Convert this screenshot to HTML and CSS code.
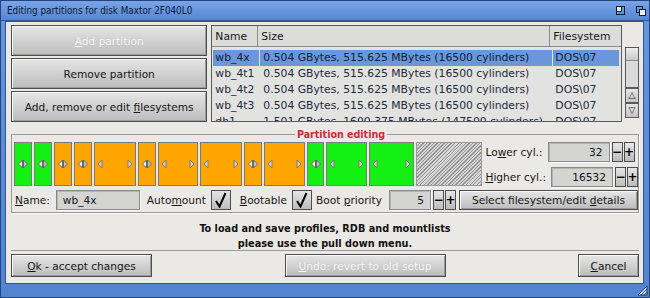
FILE: index.html
```html
<!DOCTYPE html>
<html lang="en">
<head>
    <meta charset="UTF-8">
    <title>Editing partitions</title>
    <link rel="stylesheet" href="styles.css">
</head>
<body>
<div class="window">
    <div class="titlebar">
        <span class="title">Editing partitions for disk Maxtor 2F040L0</span>
        <span class="gadgets">
            <svg width="10" height="10" viewBox="0 0 10 10"><rect x="0.5" y="0.5" width="8" height="8" fill="none" stroke="#0d1a33"/><path d="M0.5 5.5H5.5V0.5" fill="none" stroke="#0d1a33"/><rect x="1" y="1" width="4" height="4" fill="#eef3fb"/></svg>
            <svg width="10" height="10" viewBox="0 0 10 10"><rect x="0.5" y="0.5" width="6" height="6" fill="none" stroke="#0d1a33"/><rect x="3.5" y="3.5" width="6" height="6" fill="#eef3fb" stroke="#0d1a33"/></svg>
        </span>
    </div>

    <div class="body">
        <div class="top">
            <div class="actions">
                <button class="btn disabled"><u>A</u>dd partition</button>
                <button class="btn">Remove partition</button>
                <button class="btn">Add, remove or edit <u>f</u>ilesystems</button>
            </div>

            <div class="list">
                <div class="list-head">
                    <div class="cell">Name</div>
                    <div class="cell">Size</div>
                    <div class="cell">Filesystem</div>
                </div>
                <div class="row selected">
                    <div class="cell">wb_4x</div>
                    <div class="cell">0.504 GBytes, 515.625 MBytes (16500 cylinders)</div>
                    <div class="cell">DOS\07</div>
                </div>
                <div class="row">
                    <div class="cell">wb_4t1</div>
                    <div class="cell">0.504 GBytes, 515.625 MBytes (16500 cylinders)</div>
                    <div class="cell">DOS\07</div>
                </div>
                <div class="row">
                    <div class="cell">wb_4t2</div>
                    <div class="cell">0.504 GBytes, 515.625 MBytes (16500 cylinders)</div>
                    <div class="cell">DOS\07</div>
                </div>
                <div class="row">
                    <div class="cell">wb_4t3</div>
                    <div class="cell">0.504 GBytes, 515.625 MBytes (16500 cylinders)</div>
                    <div class="cell">DOS\07</div>
                </div>
                <div class="row">
                    <div class="cell">dh1</div>
                    <div class="cell">1.501 GBytes, 1600.375 MBytes (147500 cylinders)</div>
                    <div class="cell">DOS\07</div>
                </div>
            </div>

            <div class="scroller">
                <div class="track"><div class="knob"></div></div>
                <div class="arrow">&#9651;</div>
                <div class="arrow">&#9661;</div>
            </div>
        </div>

        <div class="group">
            <div class="legend">Partition editing</div>

            <div class="group-top">
                <div class="bar">
                    <div class="seg green narrow" style="width:18px"><svg class="dia" width="10" height="10" viewBox="0 0 10 10"><polygon points="4.5,1 0.5,5 4.5,9" fill="#f6f6f6" stroke="#6a6a6a"/><polygon points="5.5,1 9.5,5 5.5,9" fill="#c2c2c2" stroke="#6a6a6a"/></svg></div>
                    <div class="seg green narrow" style="width:18px"><svg class="dia" width="10" height="10" viewBox="0 0 10 10"><polygon points="4.5,1 0.5,5 4.5,9" fill="#f6f6f6" stroke="#6a6a6a"/><polygon points="5.5,1 9.5,5 5.5,9" fill="#c2c2c2" stroke="#6a6a6a"/></svg></div>
                    <div class="seg orange narrow" style="width:18px"><svg class="dia" width="10" height="10" viewBox="0 0 10 10"><polygon points="4.5,1 0.5,5 4.5,9" fill="#f6f6f6" stroke="#6a6a6a"/><polygon points="5.5,1 9.5,5 5.5,9" fill="#c2c2c2" stroke="#6a6a6a"/></svg></div>
                    <div class="seg orange narrow" style="width:18px"><svg class="dia" width="10" height="10" viewBox="0 0 10 10"><polygon points="4.5,1 0.5,5 4.5,9" fill="#f6f6f6" stroke="#6a6a6a"/><polygon points="5.5,1 9.5,5 5.5,9" fill="#c2c2c2" stroke="#6a6a6a"/></svg></div>
                    <div class="seg orange wide" style="width:42px"><svg width="6" height="10" viewBox="0 0 6 10"><polygon points="5,1 1,5 5,9" fill="#d2d2d2" stroke="#7a7a7a"/></svg><svg width="6" height="10" viewBox="0 0 6 10"><polygon points="1,1 5,5 1,9" fill="#d2d2d2" stroke="#7a7a7a"/></svg></div>
                    <div class="seg orange narrow" style="width:18px"><svg class="dia" width="10" height="10" viewBox="0 0 10 10"><polygon points="4.5,1 0.5,5 4.5,9" fill="#f6f6f6" stroke="#6a6a6a"/><polygon points="5.5,1 9.5,5 5.5,9" fill="#c2c2c2" stroke="#6a6a6a"/></svg></div>
                    <div class="seg orange wide" style="width:40px"><svg width="6" height="10" viewBox="0 0 6 10"><polygon points="5,1 1,5 5,9" fill="#d2d2d2" stroke="#7a7a7a"/></svg><svg width="6" height="10" viewBox="0 0 6 10"><polygon points="1,1 5,5 1,9" fill="#d2d2d2" stroke="#7a7a7a"/></svg></div>
                    <div class="seg orange wide" style="width:42px"><svg width="6" height="10" viewBox="0 0 6 10"><polygon points="5,1 1,5 5,9" fill="#d2d2d2" stroke="#7a7a7a"/></svg><svg width="6" height="10" viewBox="0 0 6 10"><polygon points="1,1 5,5 1,9" fill="#d2d2d2" stroke="#7a7a7a"/></svg></div>
                    <div class="seg orange narrow" style="width:18px"><svg class="dia" width="10" height="10" viewBox="0 0 10 10"><polygon points="4.5,1 0.5,5 4.5,9" fill="#f6f6f6" stroke="#6a6a6a"/><polygon points="5.5,1 9.5,5 5.5,9" fill="#c2c2c2" stroke="#6a6a6a"/></svg></div>
                    <div class="seg orange wide" style="width:41px"><svg width="6" height="10" viewBox="0 0 6 10"><polygon points="5,1 1,5 5,9" fill="#d2d2d2" stroke="#7a7a7a"/></svg><svg width="6" height="10" viewBox="0 0 6 10"><polygon points="1,1 5,5 1,9" fill="#d2d2d2" stroke="#7a7a7a"/></svg></div>
                    <div class="seg green narrow" style="width:17px"><svg class="dia" width="10" height="10" viewBox="0 0 10 10"><polygon points="4.5,1 0.5,5 4.5,9" fill="#f6f6f6" stroke="#6a6a6a"/><polygon points="5.5,1 9.5,5 5.5,9" fill="#c2c2c2" stroke="#6a6a6a"/></svg></div>
                    <div class="seg green wide" style="width:41px"><svg width="6" height="10" viewBox="0 0 6 10"><polygon points="5,1 1,5 5,9" fill="#d2d2d2" stroke="#7a7a7a"/></svg><svg width="6" height="10" viewBox="0 0 6 10"><polygon points="1,1 5,5 1,9" fill="#d2d2d2" stroke="#7a7a7a"/></svg></div>
                    <div class="seg green wide" style="width:45px"><svg width="6" height="10" viewBox="0 0 6 10"><polygon points="5,1 1,5 5,9" fill="#d2d2d2" stroke="#7a7a7a"/></svg><svg width="6" height="10" viewBox="0 0 6 10"><polygon points="1,1 5,5 1,9" fill="#d2d2d2" stroke="#7a7a7a"/></svg></div>
                    <div class="seg free" style="width:66px"></div>
                </div>

                <div class="cyl">
                    <div class="cyl-row">
                        <span class="label">Lo<u>w</u>er cyl.:</span>
                        <div class="field num">32</div>
                        <div class="step">&minus;</div>
                        <div class="step">+</div>
                    </div>
                    <div class="cyl-row">
                        <span class="label"><u>H</u>igher cyl.:</span>
                        <div class="field num">16532</div>
                        <div class="step">&minus;</div>
                        <div class="step">+</div>
                    </div>
                </div>
            </div>

            <div class="group-bottom">
                <span class="label"><u>N</u>ame:</span>
                <div class="field name">wb_4x</div>
                <span class="label automount">Auto<u>m</u>ount</span>
                <div class="check"><svg width="14" height="16" viewBox="0 0 14 16"><path d="M2 9 L5.5 14.5 L11.5 1" fill="none" stroke="#000" stroke-width="2"/></svg></div>
                <span class="label bootable"><u>B</u>ootable</span>
                <div class="check"><svg width="14" height="16" viewBox="0 0 14 16"><path d="M2 9 L5.5 14.5 L11.5 1" fill="none" stroke="#000" stroke-width="2"/></svg></div>
                <span class="label priority">Boot <u>p</u>riority</span>
                <div class="field num prio">5</div>
                <div class="step">&minus;</div>
                <div class="step">+</div>
                <button class="btn select">Select filesystem/edit <u>d</u>etails</button>
            </div>
        </div>

        <div class="info">
            To load and save profiles, RDB and mountlists<br>
            please use the pull down menu.
        </div>

        <div class="footer">
            <button class="btn ok"><u>O</u>k - accept changes</button>
            <button class="btn disabled undo"><u>U</u>ndo: revert to old setup</button>
            <button class="btn cancel"><u>C</u>ancel</button>
        </div>
    </div>

    <div class="bottom-border">
        <svg width="11" height="11" viewBox="0 0 11 11"><path d="M10 1L1 10H10Z" fill="#dfe8f6" stroke="#1c3566"/><path d="M10 4L4 10M10 7L7 10" stroke="#1c3566"/></svg>
    </div>
</div>
</body>
</html>
```

FILE: styles.css
```css
html, body {
    margin: 0;
    padding: 0;
}
body {
    width: 650px;
    height: 298px;
    overflow: hidden;
    font-family: "DejaVu Sans", sans-serif;
    font-size: 10.6px;
    color: #161616;
}
u {
    text-decoration-thickness: 1px;
    text-underline-offset: 1px;
}
.window {
    width: 650px;
    height: 298px;
    box-sizing: border-box;
    display: flex;
    flex-direction: column;
    background: linear-gradient(#6796dc, #5184d0);
    border: 1px solid #23447f;
}
.titlebar {
    height: 19px;
    display: flex;
    align-items: center;
    justify-content: space-between;
    padding: 0 3px 0 6px;
    background: linear-gradient(#79a5e6, #5486d2);
    border-bottom: 1px solid #2f5497;
}
.title {
    font-family: "DejaVu Sans Condensed", "DejaVu Sans", sans-serif;
    font-stretch: condensed;
    font-size: 9.8px;
    color: #0d1a33;
}
.gadgets {
    display: flex;
    gap: 10px;
}
.body {
    flex: 1;
    margin: 0 5px 0 4px;
    padding: 3px 4px 0 5px;
    background: #ebe9e5;
    border: 1px solid #2f5497;
    display: flex;
    flex-direction: column;
}
.btn {
    font-family: "DejaVu Sans", sans-serif;
    font-size: 10.6px;
    color: #161616;
    padding: 0;
    margin: 0;
    background: linear-gradient(#e6e6e6, #bcbcbc);
    border: 1px solid #4e4e4e;
    box-shadow: inset 1px 1px 0 #f7f7f7, inset -1px -1px 0 #9c9c9c;
    cursor: pointer;
}
.btn.disabled {
    color: #f6f6f6;
    text-shadow: 0 0 1px #b8b8b8;
}

/* list + buttons */
.top {
    display: flex;
    height: 97px;
}
.actions {
    width: 197px;
    display: flex;
    flex-direction: column;
    gap: 2px;
}
.actions .btn {
    height: 31px;
}
.list {
    width: 412px;
    margin-left: 4px;
    box-sizing: border-box;
    border: 1px solid #5a5a5a;
    background: #e2e2e1;
    overflow: hidden;
    font-size: 10.8px;
}
.list-head, .row {
    display: grid;
    grid-template-columns: 46px 292px 1fr;
}
.list-head {
    height: 21px;
    box-sizing: border-box;
    border-bottom: 1px solid #8c8c8c;
    background: #dcdcdb;
    margin-bottom: 3px;
}
.list-head .cell {
    display: flex;
    align-items: center;
    padding-left: 3px;
    border-right: 1px solid #8c8c8c;
}
.list-head .cell:last-child {
    border-right: none;
}
.row {
    height: 16px;
    line-height: 16px;
    margin: 0 2px 0 1px;
    column-gap: 1px;
}
.row .cell {
    padding-left: 2px;
    white-space: nowrap;
    color: #1e2a3a;
}
.row .cell:nth-child(2) {
    padding-left: 3px;
}
.row.selected .cell {
    background: #6a97d8;
    color: #10203a;
}
.scroller {
    width: 14px;
    margin-left: 3px;
    padding-top: 22px;
    display: flex;
    flex-direction: column;
}
.track {
    height: 41px;
    box-sizing: border-box;
    border: 1px solid #5a5a5a;
    background: #dadada;
}
.knob {
    height: 12px;
    background: linear-gradient(#eeeeee, #c8c8c8);
    border-bottom: 1px solid #8a8a8a;
}
.arrow {
    height: 15px;
    box-sizing: border-box;
    border: 1px solid #5a5a5a;
    background: linear-gradient(#e8e8e8, #c4c4c4);
    font-size: 9px;
    line-height: 13px;
    text-align: center;
    color: #222;
}
.arrow:first-of-type {
    margin-top: 3px;
}

/* partition editing group */
.group {
    margin-top: 12px;
    border: 1px solid #9a9a9a;
    box-shadow: 1px 1px 0 #fbfbfb;
    padding: 0 0 2px 2px;
    display: flex;
    flex-direction: column;
}
.legend {
    align-self: center;
    margin: -7px 0 0 30px;
    padding: 0 2px;
    height: 12px;
    line-height: 12px;
    background: #ebe9e5;
    color: #c62f35;
    font-weight: bold;
    font-size: 10.6px;
    font-family: "DejaVu Sans Condensed", "DejaVu Sans", sans-serif;
    font-stretch: condensed;
}
.group-top {
    display: flex;
    height: 45px;
    margin-top: 2px;
}
.bar {
    display: flex;
    gap: 2px;
    height: 44px;
}
.seg {
    box-sizing: border-box;
    height: 44px;
    border: 1px solid #7c7c7c;
    display: flex;
    align-items: center;
}
.seg.narrow {
    justify-content: center;
}
.seg.wide {
    justify-content: space-between;
    padding: 0 2px 0 2px;
}
.seg.green {
    background: #14ef14;
}
.seg.orange {
    background: #ffa500;
}
.seg.free {
    background: repeating-linear-gradient(135deg, #d8d8d8 0 1.5px, #8e8e8e 1.5px 2.5px);
    border-color: #9a9a9a;
}
.cyl {
    margin-left: auto;
    display: flex;
    flex-direction: column;
    gap: 5px;
}
.cyl-row {
    display: flex;
    align-items: center;
    height: 20px;
}
.cyl-row .label {
    margin-right: 5px;
}
.field {
    height: 20px;
    box-sizing: border-box;
    background: #d4d4d3;
    border: 1px solid #8a8a8a;
    box-shadow: inset 1px 1px 0 #b4b4b4, 1px 1px 0 #fafafa;
    display: flex;
    align-items: center;
    padding: 0 6px;
}
.field.num {
    justify-content: flex-end;
    width: 62px;
}
.step {
    width: 11px;
    height: 20px;
    box-sizing: border-box;
    margin-left: 1px;
    border: 1px solid #4e4e4e;
    background: linear-gradient(#e6e6e6, #bcbcbc);
    display: flex;
    align-items: center;
    justify-content: center;
    font-weight: bold;
    font-size: 12px;
    color: #000;
}
.field.num + .step {
    margin-left: 2px;
}
.group-bottom {
    display: flex;
    align-items: center;
    height: 20px;
    margin-top: 3px;
    padding-left: 1px;
}
.field.name {
    width: 84px;
    margin-left: 6px;
}
.label.automount {
    margin-left: 7px;
}
.check {
    width: 20px;
    height: 20px;
    box-sizing: border-box;
    margin-left: 5px;
    border: 1px solid #4e4e4e;
    background: linear-gradient(#e4e4e4, #bdbdbd);
    display: flex;
    align-items: center;
    justify-content: center;
}
.label.bootable {
    margin-left: 9px;
}
.label.priority {
    margin-left: 4px;
}
.field.prio {
    width: 42px;
    margin-left: 7px;
}
.btn.select {
    flex: 1;
    height: 20px;
    margin-left: 3px;
}

/* info + footer */
.info {
    height: 38px;
    box-sizing: border-box;
    padding-top: 8px;
    border-bottom: 1px solid #9a9a9a;
    text-align: center;
    font-family: "DejaVu Sans Condensed", "DejaVu Sans", sans-serif;
    font-stretch: condensed;
    font-weight: bold;
    font-size: 10.8px;
    line-height: 15px;
    color: #111;
}
.footer {
    display: flex;
    justify-content: space-between;
    margin-top: 3px;
}
.footer .btn {
    height: 23px;
}
.btn.ok {
    width: 141px;
}
.btn.undo {
    width: 161px;
}
.btn.cancel {
    width: 61px;
}
.bottom-border {
    height: 13px;
    display: flex;
    justify-content: flex-end;
    align-items: center;
    padding-right: 1px;
}
```
